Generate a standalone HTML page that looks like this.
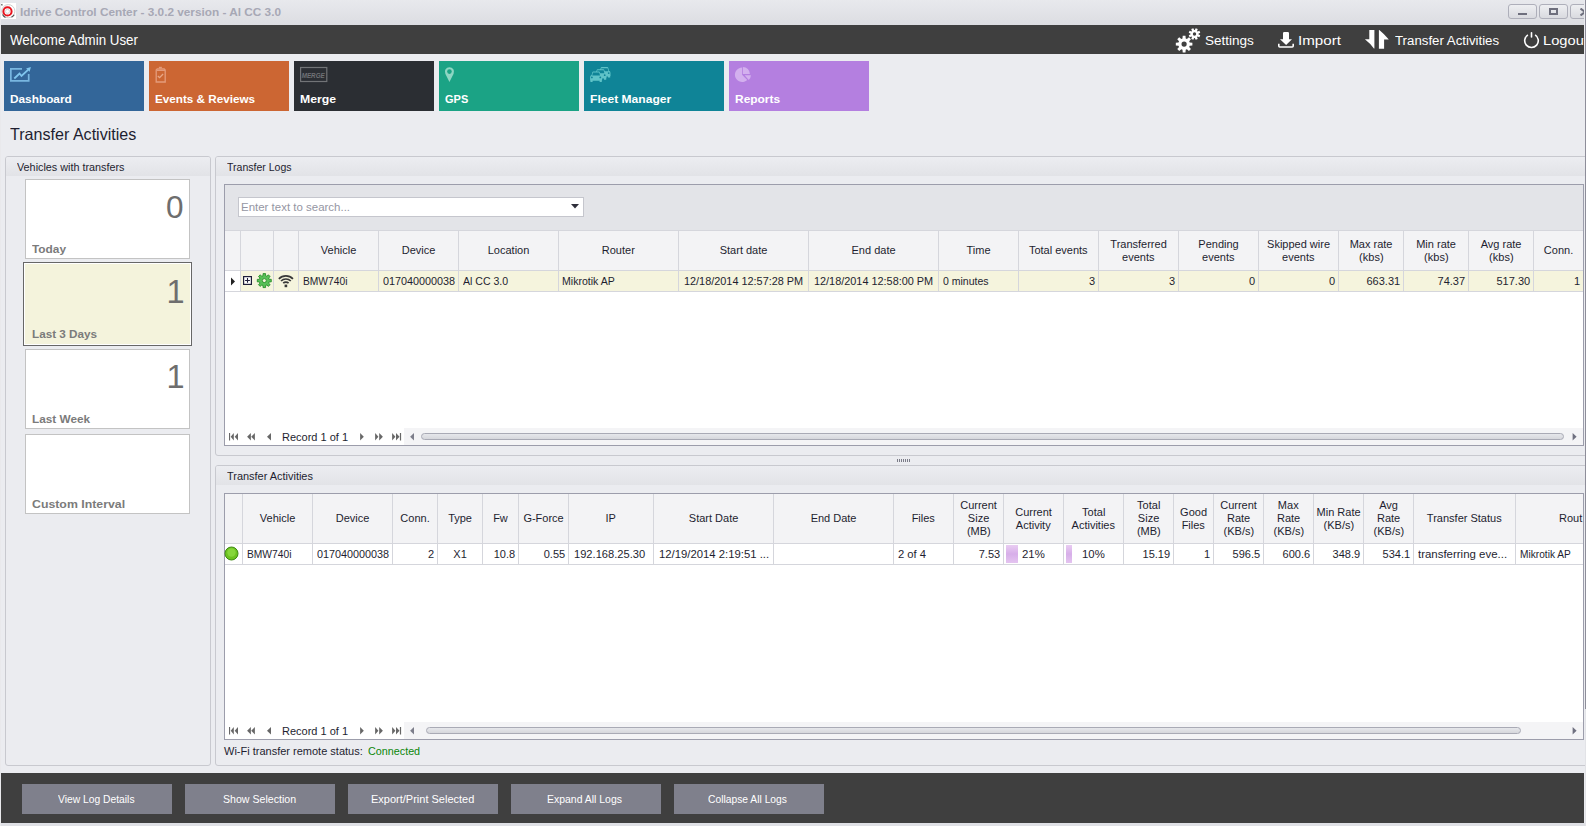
<!DOCTYPE html><html><head><meta charset="utf-8"><style>
*{margin:0;padding:0;box-sizing:border-box}
html,body{width:1586px;height:826px;overflow:hidden}
body{position:relative;background:#ebecf0;font-family:"Liberation Sans",sans-serif;font-size:11px;color:#1e1e2d}
.a{position:absolute}
.t{position:absolute;white-space:nowrap;line-height:1;transform-origin:0 0}
</style></head><body>
<div class="a" style="left:0px;top:0px;width:1586px;height:25px;background:linear-gradient(#e8e9ed,#dcdde2)"></div>
<svg class="a" style="left:1px;top:3px;" width="15" height="16" viewBox="0 0 15 16"><rect x="0" y="0" width="15" height="16" fill="#fff"/><circle cx="7.3" cy="8.2" r="6.6" fill="none" stroke="#cfcfcf" stroke-width="1"/><path d="M1.6 11.5 A6.6 6.6 0 0 0 4.5 14.5" fill="none" stroke="#555" stroke-width="1.2"/><path d="M10.5 14.3 A6.6 6.6 0 0 0 13.2 11.8" fill="none" stroke="#555" stroke-width="1.2"/><path d="M0.6 1 L1.2 2.5" stroke="#555" stroke-width="1.2"/><circle cx="6.5" cy="8.4" r="4.1" fill="none" stroke="#e8141e" stroke-width="2"/><circle cx="6.5" cy="8.4" r="2" fill="none" stroke="#d4d4d4" stroke-width="0.9"/></svg>
<div class="t" style="left:20.00px;top:7px;font-size:11.5px;font-weight:bold;color:#a7a8b5;transform:scaleX(1.0252);">Idrive Control Center - 3.0.2 version - Al CC 3.0</div>
<div class="a" style="left:1508px;top:4px;width:29px;height:15px;background:linear-gradient(#eeeff2,#d9dadf);border:1px solid #aeafba;border-radius:3px"></div>
<div class="a" style="left:1539px;top:4px;width:29px;height:15px;background:linear-gradient(#eeeff2,#d9dadf);border:1px solid #aeafba;border-radius:3px"></div>
<div class="a" style="left:1570px;top:4px;width:29px;height:15px;background:linear-gradient(#eeeff2,#d9dadf);border:1px solid #aeafba;border-radius:3px"></div>
<svg class="a" style="left:1518px;top:13px;" width="9" height="2" viewBox="0 0 9 2"><rect width="9" height="2" fill="#6e6f7d"/></svg>
<svg class="a" style="left:1549px;top:8px;" width="9" height="7" viewBox="0 0 9 7"><rect x="1" y="1" width="7" height="5" fill="none" stroke="#6e6f7d" stroke-width="2"/></svg>
<svg class="a" style="left:1580px;top:8px;" width="6" height="8" viewBox="0 0 6 8"><path d="M0.5 0.5 L5 4 L0.5 7.5" fill="none" stroke="#6e6f7d" stroke-width="2"/></svg>
<div class="a" style="left:1px;top:25px;width:1583px;height:29px;background:#3f3f3f"></div>
<div class="t" style="left:10.00px;top:33px;font-size:14px;font-weight:normal;color:#fff;transform:scaleX(0.9524);">Welcome Admin User</div>
<svg class="a" style="left:1172px;top:26px;" width="32" height="28" viewBox="0 0 32 28"><polygon points="17.68,16.50 20.38,16.71 20.38,19.49 17.68,19.70 17.17,20.91 18.94,22.98 16.98,24.94 14.91,23.17 13.70,23.68 13.49,26.38 10.71,26.38 10.50,23.68 9.29,23.17 7.22,24.94 5.26,22.98 7.03,20.91 6.52,19.70 3.82,19.49 3.82,16.71 6.52,16.50 7.03,15.29 5.26,13.22 7.22,11.26 9.29,13.03 10.50,12.52 10.71,9.82 13.49,9.82 13.70,12.52 14.91,13.03 16.98,11.26 18.94,13.22 17.17,15.29" fill="#fff"/><circle cx="12.1" cy="18.1" r="2.6" fill="#3f3f3f"/><polygon points="26.39,8.31 28.28,9.18 27.42,11.26 25.47,10.53 25.03,10.97 25.76,12.92 23.68,13.78 22.81,11.89 22.19,11.89 21.32,13.78 19.24,12.92 19.97,10.97 19.53,10.53 17.58,11.26 16.72,9.18 18.61,8.31 18.61,7.69 16.72,6.82 17.58,4.74 19.53,5.47 19.97,5.03 19.24,3.08 21.32,2.22 22.19,4.11 22.81,4.11 23.68,2.22 25.76,3.08 25.03,5.03 25.47,5.47 27.42,4.74 28.28,6.82 26.39,7.69" fill="#fff"/><circle cx="22.5" cy="8" r="1.7" fill="#3f3f3f"/></svg>
<div class="t" style="left:1205.00px;top:34px;font-size:13.7px;font-weight:normal;color:#fff;transform:scaleX(0.9876);">Settings</div>
<svg class="a" style="left:1277px;top:31px;" width="18" height="18" viewBox="0 0 18 18"><path d="M6 2.2 Q6 1 7.2 1 H10.8 Q12 1 12 2.2 V8.2 H15 L9.1 13.9 L3 8.2 H6 Z" fill="#fff"/><path d="M1.8 12.7 V15 Q1.8 16 2.8 16 H15.2 Q16.2 16 16.2 15 V12.7" fill="none" stroke="#fff" stroke-width="1.6"/></svg>
<div class="t" style="left:1297.89px;top:34px;font-size:13.7px;font-weight:normal;color:#fff;transform:scaleX(1.1056);">Import</div>
<svg class="a" style="left:1360px;top:27px;" width="32" height="24" viewBox="0 0 32 24"><path d="M9.3 3 H14.4 V21.6 H13.9 Q10.5 16.5 4.9 12.2 H9.3 Z" fill="#fff"/><path d="M18.9 21.8 H24.1 V12.4 H28.8 Q23.5 6.5 19.3 3.1 H18.9 Z" fill="#fff"/></svg>
<div class="t" style="left:1395.00px;top:34px;font-size:13.7px;font-weight:normal;color:#fff;transform:scaleX(0.9685);">Transfer Activities</div>
<svg class="a" style="left:1523px;top:31px;" width="17" height="18" viewBox="0 0 17 18"><path d="M4.9 3.93 A6.8 6.8 0 1 0 12.1 3.93" fill="none" stroke="#fff" stroke-width="1.6"/><rect x="7.7" y="0.9" width="1.6" height="5.9" rx="0.8" fill="#fff"/></svg>
<div class="t" style="left:1542.93px;top:34px;font-size:13.7px;font-weight:normal;color:#fff;transform:scaleX(1.0716);">Logout</div>
<div class="a" style="left:1584px;top:0px;width:2px;height:826px;background:#ebecf0"></div>
<div class="a" style="left:4px;top:61px;width:140px;height:50px;background:#336699"></div>
<div class="t" style="left:10.00px;top:94px;font-size:11px;font-weight:bold;color:#fff;transform:scaleX(1.0752);">Dashboard</div>
<div class="a" style="left:149px;top:61px;width:140px;height:50px;background:#cc6633"></div>
<div class="t" style="left:155.00px;top:94px;font-size:11px;font-weight:bold;color:#fff;transform:scaleX(1.0634);">Events &amp; Reviews</div>
<div class="a" style="left:294px;top:61px;width:140px;height:50px;background:#2b2e33"></div>
<div class="t" style="left:300.00px;top:94px;font-size:11px;font-weight:bold;color:#fff;transform:scaleX(1.1152);">Merge</div>
<div class="a" style="left:439px;top:61px;width:140px;height:50px;background:#1ba385"></div>
<div class="t" style="left:445.00px;top:94px;font-size:11px;font-weight:bold;color:#fff;">GPS</div>
<div class="a" style="left:584px;top:61px;width:140px;height:50px;background:#0f8497"></div>
<div class="t" style="left:590.00px;top:94px;font-size:11px;font-weight:bold;color:#fff;transform:scaleX(1.0980);">Fleet Manager</div>
<div class="a" style="left:729px;top:61px;width:140px;height:50px;background:#b47fe0"></div>
<div class="t" style="left:735.00px;top:94px;font-size:11px;font-weight:bold;color:#fff;transform:scaleX(1.0858);">Reports</div>
<svg class="a" style="left:8px;top:64px;" width="28" height="22" viewBox="0 0 28 22"><path d="M14 4.85 H2.85 V16.9 H20.7 V10" fill="none" stroke="#78b6e0" stroke-width="1.7"/><path d="M6.3 14.5 L11.5 9.5 L13.5 12 L20 5.8" fill="none" stroke="#80c6ee" stroke-width="1.8"/><polygon points="18.1,4.4 22.9,2.9 21.6,7.7" fill="#80c6ee"/></svg>
<svg class="a" style="left:150px;top:63px;" width="22" height="24" viewBox="0 0 22 24"><path d="M6.2 19 V7 L7.2 6 H14.2 L15.2 7 V19 Z" fill="none" stroke="#e49c7c" stroke-width="1.3"/><rect x="8.9" y="3.8" width="3" height="1.6" fill="#e49c7c"/><path d="M6.5 7.5 H15" stroke="#e49c7c" stroke-width="1"/><path d="M7.8 13.1 L9.6 14.7 L13.1 11" fill="none" stroke="#e8a888" stroke-width="1.3"/></svg>
<svg class="a" style="left:296px;top:64px;" width="36" height="22" viewBox="0 0 36 22"><rect x="4.6" y="3.5" width="26.2" height="14" fill="none" stroke="#727477" stroke-width="1.2"/><text x="17.2" y="14" font-family="Liberation Sans" font-size="7" font-style="italic" font-weight="bold" fill="#707276" text-anchor="middle" textLength="23" lengthAdjust="spacingAndGlyphs">MERGE</text></svg>
<svg class="a" style="left:440px;top:63px;" width="22" height="24" viewBox="0 0 22 24"><path d="M9.45 18.9 L5.3 10.8 A4.6 4.6 0 1 1 13.6 10.8 Z" fill="#8ed6c3"/><circle cx="9.45" cy="8.6" r="2.3" fill="#1ba385"/></svg>
<svg class="a" style="left:586px;top:63px;" width="30" height="24" viewBox="0 0 30 24"><path d="M14.7 5.0 Q14.9 4.1 15.7 4.1 H21.3 Q22.1 4.1 22.3 5.0 L23.0 7.699999999999999 Q24.5 8.3 24.5 9.899999999999999 V13.1 H24.2 V14.6 H22.0 V13.4 H15.0 V14.6 H12.8 V13.1 H12.5 V9.899999999999999 Q12.5 8.3 14.0 7.699999999999999 Z" fill="#5fc3c8"/><path d="M14.6 8.2 L15.4 5.199999999999999 H21.6 L22.4 8.2 Z" fill="#0f8497"/><circle cx="14.3" cy="10.1" r="0.9" fill="#0f8497"/><circle cx="22.7" cy="10.1" r="0.9" fill="#0f8497"/><path d="M10.7 7.1000000000000005 Q10.9 6.2 11.7 6.2 H17.3 Q18.1 6.2 18.3 7.1000000000000005 L19.0 9.8 Q20.5 10.4 20.5 12.0 V15.2 H20.2 V16.7 H18.0 V15.5 H11.0 V16.7 H8.8 V15.2 H8.5 V12.0 Q8.5 10.4 10.0 9.8 Z" fill="#5fc3c8"/><path d="M10.6 10.3 L11.4 7.300000000000001 H17.6 L18.4 10.3 Z" fill="#0f8497"/><circle cx="10.3" cy="12.2" r="0.9" fill="#0f8497"/><circle cx="18.7" cy="12.2" r="0.9" fill="#0f8497"/><path d="M6.3 9.3 Q6.5 8.4 7.3 8.4 H12.9 Q13.7 8.4 13.9 9.3 L14.6 12.0 Q16.1 12.600000000000001 16.1 14.2 V17.4 H15.799999999999999 V18.9 H13.6 V17.700000000000003 H6.6 V18.9 H4.3999999999999995 V17.4 H4.1 V14.2 Q4.1 12.600000000000001 5.6 12.0 Z" fill="#5fc3c8"/><path d="M6.199999999999999 12.5 L7.0 9.5 H13.2 L14.0 12.5 Z" fill="#0f8497"/><circle cx="5.8999999999999995" cy="14.4" r="0.9" fill="#0f8497"/><circle cx="14.299999999999999" cy="14.4" r="0.9" fill="#0f8497"/></svg>
<svg class="a" style="left:732px;top:63px;" width="24" height="24" viewBox="0 0 24 24"><path d="M10.1 11.8 L10.1 4.6 A7.2 7.2 0 1 0 15.2 16.9 Z" fill="#d3b0ee"/><path d="M10.9 10.9 V3.9 A7 7 0 0 1 17.9 10.9 Z" fill="#d3b0ee"/><path d="M12.6 12.3 H18.9 A7 7 0 0 1 16.8 17 Z" fill="#d3b0ee"/></svg>
<div class="t" style="left:10.00px;top:126px;font-size:16.5px;font-weight:normal;color:#1e1e30;transform:scaleX(0.9750);">Transfer Activities</div>
<div class="a" style="left:5px;top:156px;width:206px;height:610px;border:1px solid #c8c9cf;border-radius:3px;background:#ebecf0"></div>
<div class="a" style="left:6px;top:157px;width:204px;height:19px;background:linear-gradient(#ecedf1,#e2e3e7);border-radius:2px 2px 0 0"></div>
<div class="t" style="left:17.00px;top:162px;font-size:11px;font-weight:normal;color:#1e1e30;transform:scaleX(0.9824);">Vehicles with transfers</div>
<div class="a" style="left:25px;top:179px;width:165px;height:80px;background:#fff;border:1px solid #c3c3c3"></div>
<div class="t" style="left:166.00px;top:192px;font-size:31.5px;font-weight:normal;color:#6e6e6e;">0</div>
<div class="t" style="left:32.00px;top:244px;font-size:11px;font-weight:bold;color:#7b7b7b;transform:scaleX(1.0783);">Today</div>
<div class="a" style="left:23px;top:262px;width:169px;height:84px;background:#f4f3dc;border:1px solid #676767;box-shadow:inset 0 0 0 1px #fff"></div>
<div class="t" style="left:166.38px;top:276px;font-size:32.5px;font-weight:normal;color:#6e6e6e;font-family:"Liberation Mono";transform:scaleX(0.8125);">1</div>
<div class="t" style="left:32.00px;top:329px;font-size:11px;font-weight:bold;color:#7b7b7b;transform:scaleX(1.0651);">Last 3 Days</div>
<div class="a" style="left:25px;top:349px;width:165px;height:80px;background:#fff;border:1px solid #c3c3c3"></div>
<div class="t" style="left:166.38px;top:361px;font-size:32.5px;font-weight:normal;color:#6e6e6e;font-family:"Liberation Mono";transform:scaleX(0.8125);">1</div>
<div class="t" style="left:32.00px;top:414px;font-size:11px;font-weight:bold;color:#7b7b7b;transform:scaleX(1.0709);">Last Week</div>
<div class="a" style="left:25px;top:434px;width:165px;height:80px;background:#fff;border:1px solid #c3c3c3"></div>
<div class="t" style="left:32.00px;top:499px;font-size:11px;font-weight:bold;color:#7b7b7b;transform:scaleX(1.1195);">Custom Interval</div>
<div class="a" style="left:215px;top:156px;width:1380px;height:300px;border:1px solid #c8c9cf;border-radius:3px;background:#ebecf0"></div>
<div class="a" style="left:216px;top:157px;width:1378px;height:19px;background:linear-gradient(#ecedf1,#e2e3e7);border-radius:2px 2px 0 0"></div>
<div class="t" style="left:227.00px;top:162px;font-size:11px;font-weight:normal;color:#1e1e30;transform:scaleX(0.9565);">Transfer Logs</div>
<div class="a" style="left:215px;top:465px;width:1380px;height:301px;border:1px solid #c8c9cf;border-radius:3px;background:#ebecf0"></div>
<div class="a" style="left:216px;top:466px;width:1378px;height:19px;background:linear-gradient(#ecedf1,#e2e3e7);border-radius:2px 2px 0 0"></div>
<div class="t" style="left:227.00px;top:471px;font-size:11px;font-weight:normal;color:#1e1e30;transform:scaleX(0.9943);">Transfer Activities</div>
<div class="a" style="left:897px;top:459px;width:1px;height:3px;background:#7b7c88"></div>
<div class="a" style="left:899px;top:459px;width:1px;height:3px;background:#7b7c88"></div>
<div class="a" style="left:901px;top:459px;width:1px;height:3px;background:#7b7c88"></div>
<div class="a" style="left:903px;top:459px;width:1px;height:3px;background:#7b7c88"></div>
<div class="a" style="left:905px;top:459px;width:1px;height:3px;background:#7b7c88"></div>
<div class="a" style="left:907px;top:459px;width:1px;height:3px;background:#7b7c88"></div>
<div class="a" style="left:909px;top:459px;width:1px;height:3px;background:#7b7c88"></div>
<div class="a" style="left:224px;top:184px;width:1360px;height:262px;background:#fff;border:1px solid #9c9dab"></div>
<div class="a" style="left:225px;top:185px;width:1358px;height:45px;background:#e3e4e8"></div>
<div class="a" style="left:238px;top:197px;width:346px;height:20px;background:#fff;border:1px solid #c5c6cd"></div>
<div class="t" style="left:241.00px;top:202px;font-size:11px;font-weight:normal;color:#9596a3;transform:scaleX(1.0431);">Enter text to search...</div>
<svg class="a" style="left:571px;top:204px;" width="8" height="5" viewBox="0 0 8 5"><path d="M0 0 H8 L4 4.5 Z" fill="#2e2e3a"/></svg>
<div class="a" style="left:225px;top:230px;width:1358px;height:1px;background:#d5d6dc"></div>
<div class="a" style="left:225px;top:231px;width:1358px;height:39px;background:#f3f3f5"></div>
<div class="a" style="left:225px;top:270px;width:1358px;height:1px;background:#d5d6dc"></div>
<div class="a" style="left:241px;top:271px;width:1342px;height:20px;background:#f5f4dd"></div>
<div class="a" style="left:225px;top:291px;width:1358px;height:1px;background:#d5d6dc"></div>
<div class="a" style="left:240px;top:231px;width:1px;height:61px;background:#d5d6dc"></div>
<div class="a" style="left:273px;top:231px;width:1px;height:61px;background:#d5d6dc"></div>
<div class="a" style="left:298px;top:231px;width:1px;height:61px;background:#d5d6dc"></div>
<div class="a" style="left:378px;top:231px;width:1px;height:61px;background:#d5d6dc"></div>
<div class="a" style="left:458px;top:231px;width:1px;height:61px;background:#d5d6dc"></div>
<div class="a" style="left:558px;top:231px;width:1px;height:61px;background:#d5d6dc"></div>
<div class="a" style="left:678px;top:231px;width:1px;height:61px;background:#d5d6dc"></div>
<div class="a" style="left:808px;top:231px;width:1px;height:61px;background:#d5d6dc"></div>
<div class="a" style="left:938px;top:231px;width:1px;height:61px;background:#d5d6dc"></div>
<div class="a" style="left:1018px;top:231px;width:1px;height:61px;background:#d5d6dc"></div>
<div class="a" style="left:1098px;top:231px;width:1px;height:61px;background:#d5d6dc"></div>
<div class="a" style="left:1178px;top:231px;width:1px;height:61px;background:#d5d6dc"></div>
<div class="a" style="left:1258px;top:231px;width:1px;height:61px;background:#d5d6dc"></div>
<div class="a" style="left:1338px;top:231px;width:1px;height:61px;background:#d5d6dc"></div>
<div class="a" style="left:1403px;top:231px;width:1px;height:61px;background:#d5d6dc"></div>
<div class="a" style="left:1468px;top:231px;width:1px;height:61px;background:#d5d6dc"></div>
<div class="a" style="left:1533px;top:231px;width:1px;height:61px;background:#d5d6dc"></div>
<div class="t" style="left:320.82px;top:245px;font-size:11px;font-weight:normal;color:#1e1e30;">Vehicle</div>
<div class="t" style="left:401.75px;top:245px;font-size:11px;font-weight:normal;color:#1e1e30;">Device</div>
<div class="t" style="left:487.76px;top:245px;font-size:11px;font-weight:normal;color:#1e1e30;">Location</div>
<div class="t" style="left:601.82px;top:245px;font-size:11px;font-weight:normal;color:#1e1e30;">Router</div>
<div class="t" style="left:719.71px;top:245px;font-size:11px;font-weight:normal;color:#1e1e30;">Start date</div>
<div class="t" style="left:851.54px;top:245px;font-size:11px;font-weight:normal;color:#1e1e30;">End date</div>
<div class="t" style="left:966.54px;top:245px;font-size:11px;font-weight:normal;color:#1e1e30;">Time</div>
<div class="t" style="left:1028.90px;top:245px;font-size:11px;font-weight:normal;color:#1e1e30;">Total events</div>
<div class="t" style="left:1110.34px;top:239px;font-size:11px;font-weight:normal;color:#1e1e30;">Transferred</div>
<div class="t" style="left:1122.05px;top:252px;font-size:11px;font-weight:normal;color:#1e1e30;">events</div>
<div class="t" style="left:1198.37px;top:239px;font-size:11px;font-weight:normal;color:#1e1e30;">Pending</div>
<div class="t" style="left:1202.05px;top:252px;font-size:11px;font-weight:normal;color:#1e1e30;">events</div>
<div class="t" style="left:1267.07px;top:239px;font-size:11px;font-weight:normal;color:#1e1e30;">Skipped wire</div>
<div class="t" style="left:1282.05px;top:252px;font-size:11px;font-weight:normal;color:#1e1e30;">events</div>
<div class="t" style="left:1349.66px;top:239px;font-size:11px;font-weight:normal;color:#1e1e30;">Max rate</div>
<div class="t" style="left:1359.11px;top:252px;font-size:11px;font-weight:normal;color:#1e1e30;">(kbs)</div>
<div class="t" style="left:1416.19px;top:239px;font-size:11px;font-weight:normal;color:#1e1e30;">Min rate</div>
<div class="t" style="left:1424.11px;top:252px;font-size:11px;font-weight:normal;color:#1e1e30;">(kbs)</div>
<div class="t" style="left:1480.68px;top:239px;font-size:11px;font-weight:normal;color:#1e1e30;">Avg rate</div>
<div class="t" style="left:1489.11px;top:252px;font-size:11px;font-weight:normal;color:#1e1e30;">(kbs)</div>
<div class="t" style="left:1543.85px;top:245px;font-size:11px;font-weight:normal;color:#1e1e30;">Conn.</div>
<div class="t" style="left:303.00px;top:276px;font-size:11px;font-weight:normal;color:#1e1e30;transform:scaleX(0.9315);">BMW740i</div>
<div class="t" style="left:383.00px;top:276px;font-size:11px;font-weight:normal;color:#1e1e30;transform:scaleX(0.9823);">017040000038</div>
<div class="t" style="left:463.00px;top:276px;font-size:11px;font-weight:normal;color:#1e1e30;transform:scaleX(0.9584);">Al CC 3.0</div>
<div class="t" style="left:562.00px;top:276px;font-size:11px;font-weight:normal;color:#1e1e30;transform:scaleX(0.9587);">Mikrotik AP</div>
<div class="t" style="left:684.00px;top:276px;font-size:11px;font-weight:normal;color:#1e1e30;transform:scaleX(0.9890);">12/18/2014 12:57:28 PM</div>
<div class="t" style="left:814.00px;top:276px;font-size:11px;font-weight:normal;color:#1e1e30;transform:scaleX(0.9890);">12/18/2014 12:58:00 PM</div>
<div class="t" style="left:943.00px;top:276px;font-size:11px;font-weight:normal;color:#1e1e30;transform:scaleX(0.9546);">0 minutes</div>
<div class="t" style="left:1089.00px;top:276px;font-size:11px;font-weight:normal;color:#1e1e30;">3</div>
<div class="t" style="left:1169.00px;top:276px;font-size:11px;font-weight:normal;color:#1e1e30;">3</div>
<div class="t" style="left:1249.00px;top:276px;font-size:11px;font-weight:normal;color:#1e1e30;">0</div>
<div class="t" style="left:1329.00px;top:276px;font-size:11px;font-weight:normal;color:#1e1e30;">0</div>
<div class="t" style="left:1366.47px;top:276px;font-size:11px;font-weight:normal;color:#1e1e30;">663.31</div>
<div class="t" style="left:1437.59px;top:276px;font-size:11px;font-weight:normal;color:#1e1e30;">74.37</div>
<div class="t" style="left:1496.47px;top:276px;font-size:11px;font-weight:normal;color:#1e1e30;">517.30</div>
<div class="t" style="left:1574.00px;top:276px;font-size:11px;font-weight:normal;color:#1e1e30;">1</div>
<svg class="a" style="left:230px;top:277px;" width="6" height="9" viewBox="0 0 6 9"><path d="M1 0.5 L5 4.5 L1 8.5 Z" fill="#222"/></svg>
<svg class="a" style="left:243px;top:276px;" width="9" height="9" viewBox="0 0 9 9"><rect x="0.6" y="0.6" width="7.8" height="7.8" fill="#fff" stroke="#1e1e3a" stroke-width="1.2"/><path d="M2.1 4.45 H6.9 M4.5 2.05 V6.85" stroke="#1e1e3a" stroke-width="1.1"/></svg>
<svg class="a" style="left:256px;top:272px;" width="17" height="17" viewBox="0 0 17 17"><polygon points="13.26,7.41 15.28,7.31 15.28,9.89 13.26,9.79 12.65,11.26 14.15,12.62 12.32,14.45 10.96,12.95 9.49,13.56 9.59,15.58 7.01,15.58 7.11,13.56 5.64,12.95 4.28,14.45 2.45,12.62 3.95,11.26 3.34,9.79 1.32,9.89 1.32,7.31 3.34,7.41 3.95,5.94 2.45,4.58 4.28,2.75 5.64,4.25 7.11,3.64 7.01,1.62 9.59,1.62 9.49,3.64 10.96,4.25 12.32,2.75 14.15,4.58 12.65,5.94" fill="#58c058" stroke="#2b8f2b" stroke-width="0.9"/><circle cx="8.3" cy="8.6" r="2.0" fill="#f5f4dd" stroke="#2b8f2b" stroke-width="0.9"/></svg>
<svg class="a" style="left:276px;top:272px;" width="20" height="16" viewBox="0 0 20 16"><g fill="none" stroke="#383838" stroke-width="1.7"><path d="M2.83 6.83 A10 10 0 0 1 16.97 6.83"/><path d="M5.02 9.02 A6.9 6.9 0 0 1 14.78 9.02"/><path d="M7.21 11.21 A3.8 3.8 0 0 1 12.59 11.21"/></g><rect x="8.6" y="12.6" width="2.6" height="2.6" fill="#383838"/></svg>
<div class="a" style="left:404px;top:428px;width:1179px;height:17px;background:#f4f4f6"></div>
<svg class="a" style="left:226px;top:432px;" width="180" height="10" viewBox="0 0 180 10"><rect x="3" y="1" width="1.1" height="7.5" fill="#676767"/><path d="M4.7 4.75 L7.8 1 V8.5 Z" fill="#676767"/><path d="M8.7 4.75 L12 1 V8.5 Z" fill="#676767"/><path d="M21.1 4.75 L24.9 1 V8.5 Z" fill="#676767"/><path d="M25.2 4.75 L28.9 1 V8.5 Z" fill="#676767"/><path d="M41 4.75 L45 1 V8.5 Z" fill="#676767"/><path d="M137.8 4.75 L134.1 1 V8.5 Z" fill="#676767"/><path d="M152.4 4.75 L149.1 1 V8.5 Z" fill="#676767"/><path d="M156.9 4.75 L153.2 1 V8.5 Z" fill="#676767"/><path d="M169.4 4.75 L166.1 1 V8.5 Z" fill="#676767"/><path d="M173.5 4.75 L170 1 V8.5 Z" fill="#676767"/><rect x="173.9" y="1" width="1.2" height="7.5" fill="#676767"/></svg>
<svg class="a" style="left:408px;top:432px;" width="8" height="10" viewBox="0 0 8 10"><path d="M2.1 4.75 L6 1 V8.5 Z" fill="#7d7e8b"/></svg>
<svg class="a" style="left:1570px;top:432px;" width="10" height="10" viewBox="0 0 10 10"><path d="M6.6 4.75 L2.6 1 V8.5 Z" fill="#6f7080"/></svg>
<div class="t" style="left:282.00px;top:432px;font-size:11px;font-weight:normal;color:#1e1e30;">Record 1 of 1</div>
<div class="a" style="left:421px;top:433px;width:1143px;height:7px;background:linear-gradient(#e6e7eb,#d6d7dc);border:1px solid #a9aab5;border-radius:4px"></div>
<div class="a" style="left:224px;top:493px;width:1360px;height:247px;background:#fff;border:1px solid #9c9dab"></div>
<div class="a" style="left:225px;top:494px;width:1358px;height:49px;background:#f3f3f5"></div>
<div class="a" style="left:225px;top:543px;width:1358px;height:1px;background:#d5d6dc"></div>
<div class="a" style="left:225px;top:564px;width:1358px;height:1px;background:#d5d6dc"></div>
<div class="a" style="left:242px;top:494px;width:1px;height:71px;background:#d5d6dc"></div>
<div class="a" style="left:312px;top:494px;width:1px;height:71px;background:#d5d6dc"></div>
<div class="a" style="left:392px;top:494px;width:1px;height:71px;background:#d5d6dc"></div>
<div class="a" style="left:437px;top:494px;width:1px;height:71px;background:#d5d6dc"></div>
<div class="a" style="left:482px;top:494px;width:1px;height:71px;background:#d5d6dc"></div>
<div class="a" style="left:518px;top:494px;width:1px;height:71px;background:#d5d6dc"></div>
<div class="a" style="left:568px;top:494px;width:1px;height:71px;background:#d5d6dc"></div>
<div class="a" style="left:653px;top:494px;width:1px;height:71px;background:#d5d6dc"></div>
<div class="a" style="left:773px;top:494px;width:1px;height:71px;background:#d5d6dc"></div>
<div class="a" style="left:893px;top:494px;width:1px;height:71px;background:#d5d6dc"></div>
<div class="a" style="left:953px;top:494px;width:1px;height:71px;background:#d5d6dc"></div>
<div class="a" style="left:1003px;top:494px;width:1px;height:71px;background:#d5d6dc"></div>
<div class="a" style="left:1063px;top:494px;width:1px;height:71px;background:#d5d6dc"></div>
<div class="a" style="left:1123px;top:494px;width:1px;height:71px;background:#d5d6dc"></div>
<div class="a" style="left:1173px;top:494px;width:1px;height:71px;background:#d5d6dc"></div>
<div class="a" style="left:1213px;top:494px;width:1px;height:71px;background:#d5d6dc"></div>
<div class="a" style="left:1263px;top:494px;width:1px;height:71px;background:#d5d6dc"></div>
<div class="a" style="left:1313px;top:494px;width:1px;height:71px;background:#d5d6dc"></div>
<div class="a" style="left:1363px;top:494px;width:1px;height:71px;background:#d5d6dc"></div>
<div class="a" style="left:1413px;top:494px;width:1px;height:71px;background:#d5d6dc"></div>
<div class="a" style="left:1515px;top:494px;width:1px;height:71px;background:#d5d6dc"></div>
<div class="t" style="left:259.82px;top:513px;font-size:11px;font-weight:normal;color:#1e1e30;">Vehicle</div>
<div class="t" style="left:335.75px;top:513px;font-size:11px;font-weight:normal;color:#1e1e30;">Device</div>
<div class="t" style="left:400.35px;top:513px;font-size:11px;font-weight:normal;color:#1e1e30;">Conn.</div>
<div class="t" style="left:448.14px;top:513px;font-size:11px;font-weight:normal;color:#1e1e30;">Type</div>
<div class="t" style="left:493.14px;top:513px;font-size:11px;font-weight:normal;color:#1e1e30;">Fw</div>
<div class="t" style="left:523.39px;top:513px;font-size:11px;font-weight:normal;color:#1e1e30;">G-Force</div>
<div class="t" style="left:605.47px;top:513px;font-size:11px;font-weight:normal;color:#1e1e30;">IP</div>
<div class="t" style="left:688.80px;top:513px;font-size:11px;font-weight:normal;color:#1e1e30;">Start Date</div>
<div class="t" style="left:810.63px;top:513px;font-size:11px;font-weight:normal;color:#1e1e30;">End Date</div>
<div class="t" style="left:911.64px;top:513px;font-size:11px;font-weight:normal;color:#1e1e30;">Files</div>
<div class="t" style="left:960.19px;top:500px;font-size:11px;font-weight:normal;color:#1e1e30;">Current</div>
<div class="t" style="left:967.86px;top:513px;font-size:11px;font-weight:normal;color:#1e1e30;">Size</div>
<div class="t" style="left:966.92px;top:526px;font-size:11px;font-weight:normal;color:#1e1e30;">(MB)</div>
<div class="t" style="left:1015.19px;top:507px;font-size:11px;font-weight:normal;color:#1e1e30;">Current</div>
<div class="t" style="left:1015.83px;top:520px;font-size:11px;font-weight:normal;color:#1e1e30;">Activity</div>
<div class="t" style="left:1082.10px;top:507px;font-size:11px;font-weight:normal;color:#1e1e30;">Total</div>
<div class="t" style="left:1071.55px;top:520px;font-size:11px;font-weight:normal;color:#1e1e30;">Activities</div>
<div class="t" style="left:1137.10px;top:500px;font-size:11px;font-weight:normal;color:#1e1e30;">Total</div>
<div class="t" style="left:1137.86px;top:513px;font-size:11px;font-weight:normal;color:#1e1e30;">Size</div>
<div class="t" style="left:1136.92px;top:526px;font-size:11px;font-weight:normal;color:#1e1e30;">(MB)</div>
<div class="t" style="left:1180.10px;top:507px;font-size:11px;font-weight:normal;color:#1e1e30;">Good</div>
<div class="t" style="left:1181.64px;top:520px;font-size:11px;font-weight:normal;color:#1e1e30;">Files</div>
<div class="t" style="left:1220.19px;top:500px;font-size:11px;font-weight:normal;color:#1e1e30;">Current</div>
<div class="t" style="left:1226.94px;top:513px;font-size:11px;font-weight:normal;color:#1e1e30;">Rate</div>
<div class="t" style="left:1223.55px;top:526px;font-size:11px;font-weight:normal;color:#1e1e30;">(KB/s)</div>
<div class="t" style="left:1277.86px;top:500px;font-size:11px;font-weight:normal;color:#1e1e30;">Max</div>
<div class="t" style="left:1276.94px;top:513px;font-size:11px;font-weight:normal;color:#1e1e30;">Rate</div>
<div class="t" style="left:1273.55px;top:526px;font-size:11px;font-weight:normal;color:#1e1e30;">(KB/s)</div>
<div class="t" style="left:1316.55px;top:507px;font-size:11px;font-weight:normal;color:#1e1e30;">Min Rate</div>
<div class="t" style="left:1323.55px;top:520px;font-size:11px;font-weight:normal;color:#1e1e30;">(KB/s)</div>
<div class="t" style="left:1379.18px;top:500px;font-size:11px;font-weight:normal;color:#1e1e30;">Avg</div>
<div class="t" style="left:1376.94px;top:513px;font-size:11px;font-weight:normal;color:#1e1e30;">Rate</div>
<div class="t" style="left:1373.55px;top:526px;font-size:11px;font-weight:normal;color:#1e1e30;">(KB/s)</div>
<div class="t" style="left:1426.86px;top:513px;font-size:11px;font-weight:normal;color:#1e1e30;">Transfer Status</div>
<div class="t" style="left:1559.00px;top:513px;font-size:11px;font-weight:normal;color:#1e1e30;">Rout</div>
<div class="t" style="left:247.00px;top:549px;font-size:11px;font-weight:normal;color:#1e1e30;transform:scaleX(0.9315);">BMW740i</div>
<div class="t" style="left:317.00px;top:549px;font-size:11px;font-weight:normal;color:#1e1e30;transform:scaleX(0.9823);">017040000038</div>
<div class="t" style="left:428.00px;top:549px;font-size:11px;font-weight:normal;color:#1e1e30;">2</div>
<div class="t" style="left:453.33px;top:549px;font-size:11px;font-weight:normal;color:#1e1e30;">X1</div>
<div class="t" style="left:493.71px;top:549px;font-size:11px;font-weight:normal;color:#1e1e30;">10.8</div>
<div class="t" style="left:543.71px;top:549px;font-size:11px;font-weight:normal;color:#1e1e30;">0.55</div>
<div class="t" style="left:574.00px;top:549px;font-size:11px;font-weight:normal;color:#1e1e30;transform:scaleX(1.0110);">192.168.25.30</div>
<div class="t" style="left:659.00px;top:549px;font-size:11px;font-weight:normal;color:#1e1e30;transform:scaleX(1.0282);">12/19/2014 2:19:51 ...</div>
<div class="t" style="left:898.00px;top:549px;font-size:11px;font-weight:normal;color:#1e1e30;transform:scaleX(1.0218);">2 of 4</div>
<div class="t" style="left:978.71px;top:549px;font-size:11px;font-weight:normal;color:#1e1e30;">7.53</div>
<div class="t" style="left:1142.59px;top:549px;font-size:11px;font-weight:normal;color:#1e1e30;">15.19</div>
<div class="t" style="left:1204.00px;top:549px;font-size:11px;font-weight:normal;color:#1e1e30;">1</div>
<div class="t" style="left:1232.59px;top:549px;font-size:11px;font-weight:normal;color:#1e1e30;">596.5</div>
<div class="t" style="left:1282.59px;top:549px;font-size:11px;font-weight:normal;color:#1e1e30;">600.6</div>
<div class="t" style="left:1332.59px;top:549px;font-size:11px;font-weight:normal;color:#1e1e30;">348.9</div>
<div class="t" style="left:1382.59px;top:549px;font-size:11px;font-weight:normal;color:#1e1e30;">534.1</div>
<div class="t" style="left:1418.00px;top:549px;font-size:11px;font-weight:normal;color:#1e1e30;transform:scaleX(1.0405);">transferring eve...</div>
<div class="t" style="left:1520.00px;top:549px;font-size:11px;font-weight:normal;color:#1e1e30;transform:scaleX(0.9226);">Mikrotik AP</div>
<div class="t" style="left:1022.00px;top:549px;font-size:11px;font-weight:normal;color:#1e1e30;transform:scaleX(1.0344);">21%</div>
<div class="t" style="left:1082.00px;top:549px;font-size:11px;font-weight:normal;color:#1e1e30;transform:scaleX(1.0344);">10%</div>
<svg class="a" style="left:224px;top:546px;" width="15" height="15" viewBox="0 0 15 15"><circle cx="7.5" cy="7.5" r="6.5" fill="#6cc21f" stroke="#3d8a10" stroke-width="1"/><circle cx="7.5" cy="6.5" r="4.2" fill="#86d63a"/></svg>
<div class="a" style="left:1006px;top:545px;width:12px;height:18px;background:linear-gradient(#e9cdf2,#d7aee9 50%,#e4c4f0)"></div>
<div class="a" style="left:1066px;top:545px;width:6px;height:18px;background:linear-gradient(#e9cdf2,#d7aee9 50%,#e4c4f0)"></div>
<div class="a" style="left:404px;top:722px;width:1179px;height:17px;background:#f4f4f6"></div>
<svg class="a" style="left:226px;top:726px;" width="180" height="10" viewBox="0 0 180 10"><rect x="3" y="1" width="1.1" height="7.5" fill="#676767"/><path d="M4.7 4.75 L7.8 1 V8.5 Z" fill="#676767"/><path d="M8.7 4.75 L12 1 V8.5 Z" fill="#676767"/><path d="M21.1 4.75 L24.9 1 V8.5 Z" fill="#676767"/><path d="M25.2 4.75 L28.9 1 V8.5 Z" fill="#676767"/><path d="M41 4.75 L45 1 V8.5 Z" fill="#676767"/><path d="M137.8 4.75 L134.1 1 V8.5 Z" fill="#676767"/><path d="M152.4 4.75 L149.1 1 V8.5 Z" fill="#676767"/><path d="M156.9 4.75 L153.2 1 V8.5 Z" fill="#676767"/><path d="M169.4 4.75 L166.1 1 V8.5 Z" fill="#676767"/><path d="M173.5 4.75 L170 1 V8.5 Z" fill="#676767"/><rect x="173.9" y="1" width="1.2" height="7.5" fill="#676767"/></svg>
<svg class="a" style="left:408px;top:726px;" width="8" height="10" viewBox="0 0 8 10"><path d="M2.1 4.75 L6 1 V8.5 Z" fill="#7d7e8b"/></svg>
<svg class="a" style="left:1570px;top:726px;" width="10" height="10" viewBox="0 0 10 10"><path d="M6.6 4.75 L2.6 1 V8.5 Z" fill="#6f7080"/></svg>
<div class="t" style="left:282.00px;top:726px;font-size:11px;font-weight:normal;color:#1e1e30;">Record 1 of 1</div>
<div class="a" style="left:426px;top:727px;width:1095px;height:7px;background:linear-gradient(#e6e7eb,#d6d7dc);border:1px solid #a9aab5;border-radius:4px"></div>
<div class="t" style="left:224.00px;top:746px;font-size:11px;font-weight:normal;color:#1e1e30;">Wi-Fi transfer remote status:</div>
<div class="t" style="left:368.00px;top:746px;font-size:11px;font-weight:normal;color:#0a870a;transform:scaleX(0.9795);">Connected</div>
<div class="a" style="left:1px;top:773px;width:1583px;height:50px;background:#3f3f3f"></div>
<div class="a" style="left:22px;top:784px;width:150px;height:30px;background:#7f808c"></div>
<div class="t" style="left:58.00px;top:794px;font-size:11px;font-weight:normal;color:#fff;transform:scaleX(0.9364);">View Log Details</div>
<div class="a" style="left:185px;top:784px;width:150px;height:30px;background:#7f808c"></div>
<div class="t" style="left:223.00px;top:794px;font-size:11px;font-weight:normal;color:#fff;transform:scaleX(0.9643);">Show Selection</div>
<div class="a" style="left:348px;top:784px;width:150px;height:30px;background:#7f808c"></div>
<div class="t" style="left:371.00px;top:794px;font-size:11px;font-weight:normal;color:#fff;">Export/Print Selected</div>
<div class="a" style="left:511px;top:784px;width:150px;height:30px;background:#7f808c"></div>
<div class="t" style="left:547.00px;top:794px;font-size:11px;font-weight:normal;color:#fff;transform:scaleX(0.9500);">Expand All Logs</div>
<div class="a" style="left:674px;top:784px;width:150px;height:30px;background:#7f808c"></div>
<div class="t" style="left:708.00px;top:794px;font-size:11px;font-weight:normal;color:#fff;transform:scaleX(0.9358);">Collapse All Logs</div>
<div class="a" style="left:1px;top:823px;width:1584px;height:3px;background:#dfe0e5"></div>
<div class="a" style="left:0px;top:0px;width:1px;height:826px;background:#e9e9ec"></div>
<div class="a" style="left:1585px;top:0px;width:1px;height:709px;background:#8e8e9a"></div>
<div class="a" style="left:1585px;top:709px;width:1px;height:117px;background:#e2e3e7"></div>
</body></html>
